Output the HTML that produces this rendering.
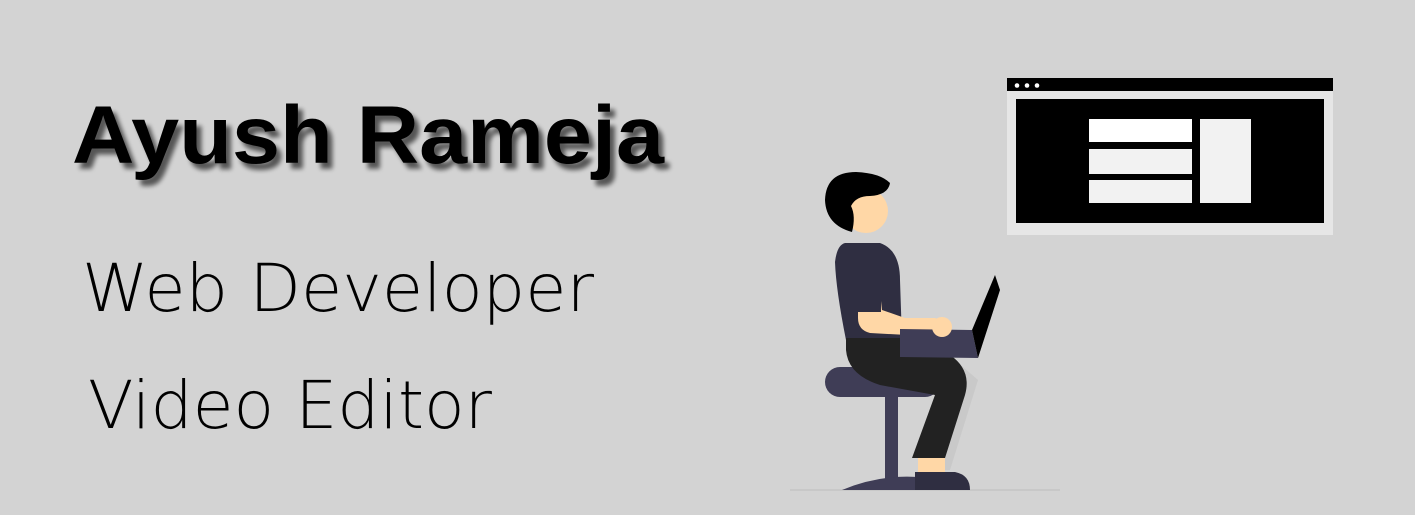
<!DOCTYPE html>
<html><head><meta charset="utf-8"><style>
html,body{margin:0;padding:0;background:#d3d3d3;width:1415px;height:515px;overflow:hidden}
svg{display:block}
</style></head><body>
<svg width="1415" height="515" viewBox="0 0 1415 515" xmlns="http://www.w3.org/2000/svg">
<defs><filter id="sh" x="-5%" y="-20%" width="110%" height="140%"><feGaussianBlur in="SourceAlpha" stdDeviation="2.5"/><feOffset dx="5" dy="6"/><feComponentTransfer><feFuncA type="linear" slope="0.6"/></feComponentTransfer><feMerge><feMergeNode/><feMergeNode in="SourceGraphic"/></feMerge></filter></defs>
<rect width="1415" height="515" fill="#d3d3d3"/>
<text x="72" y="163" font-family="Liberation Sans, sans-serif" font-weight="bold" font-size="82" textLength="592" lengthAdjust="spacingAndGlyphs" fill="#000" filter="url(#sh)">Ayush Rameja</text>
<text x="82" y="311" font-family="DejaVu Sans, Liberation Sans, sans-serif" font-weight="200" font-size="66" textLength="512" lengthAdjust="spacingAndGlyphs" fill="#000">Web Developer</text>
<text x="88" y="428" font-family="DejaVu Sans, Liberation Sans, sans-serif" font-weight="200" font-size="66" textLength="404" lengthAdjust="spacingAndGlyphs" fill="#000">Video Editor</text>

<!-- browser window -->
<rect x="1007" y="78" width="326" height="157" fill="#e6e6e6"/>
<rect x="1007" y="78" width="326" height="13" fill="#000"/>
<circle cx="1017" cy="85.5" r="2.3" fill="#fff"/><circle cx="1027" cy="85.5" r="2.3" fill="#fff"/><circle cx="1037" cy="85.5" r="2.3" fill="#fff"/>
<rect x="1016" y="99" width="308" height="124" fill="#000"/>
<rect x="1089" y="119" width="103" height="23" fill="#fff"/>
<rect x="1089" y="149" width="103" height="25" fill="#f2f2f2"/>
<rect x="1089" y="180" width="103" height="23" fill="#f2f2f2"/>
<rect x="1200" y="119" width="51" height="84" fill="#f2f2f2"/>

<!-- floor -->
<rect x="790" y="489" width="270" height="2" fill="#c8c8c8"/>
<!-- stool -->
<rect x="825" y="367" width="115" height="30" rx="15" fill="#3f3d56"/>
<rect x="885" y="390" width="13" height="90" fill="#3f3d56"/>
<path d="M842 490 Q890 470 940 480 L940 490 Z" fill="#3f3d56"/>
<!-- shadow leg -->
<path d="M955 360 L978 380 L950 470 L935 470 Z" fill="#c9c9c9"/>
<!-- torso -->
<path d="M845 243 L880 243 Q900 250 900 280 L902 340 L846 340 Q836 290 835 262 Q837 245 845 243 Z" fill="#2f2e41"/>
<!-- pants -->
<path d="M846 338 L902 338 L950 355 Q972 370 965 395 L945 458 L912 458 L935 395 L880 385 Q848 375 846 350 Z" fill="#222"/>
<!-- ankle/shoe -->
<rect x="918" y="458" width="27" height="14" fill="#ffd7a6"/>
<path d="M915 472 L955 472 Q970 475 970 490 L915 490 Z" fill="#2f2e41"/>
<!-- arm -->
<path d="M858 292 L880 292 L882 310 L905 318 L935 318 Q955 325 945 337 L870 333 Q858 330 858 318 Z" fill="#ffd7a6"/>
<rect x="845" y="290" width="36" height="22" fill="#2f2e41"/>
<!-- laptop -->
<path d="M900 329 L972 330 L978 358 L900 357 Z" fill="#3f3d56"/>
<path d="M972 330 L995 275 L1000 290 L978 358 Z" fill="#000"/>
<!-- hand -->
<circle cx="942" cy="327" r="10" fill="#ffd7a6"/>
<!-- head -->
<circle cx="866" cy="211" r="22" fill="#ffd7a6"/>
<path d="M852 232 Q826 225 825 200 Q826 172 856 172 Q880 173 890 183 Q888 195 870 196 Q856 196 851 206 Q856 216 852 232 Z" fill="#000"/>
</svg>
</body></html>
